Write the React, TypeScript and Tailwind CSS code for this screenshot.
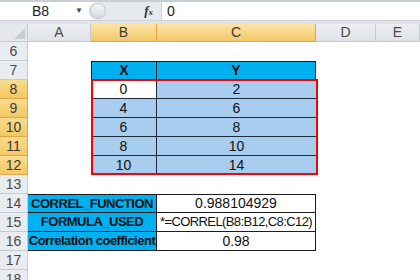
import React from "react";

const cols = [
  { key: "A", w: "w-[63px]" },
  { key: "B", w: "w-[66px]" },
  { key: "C", w: "w-[159px]" },
  { key: "D", w: "w-[60px]" },
  { key: "E", w: "flex-1" },
];

const font = "font-['Liberation_Sans',sans-serif]";

const data = [
  ["0", "2"],
  ["4", "6"],
  ["6", "8"],
  ["8", "10"],
  ["10", "14"],
];

const summary = [
  ["CORREL_FUNCTION", "0.988104929"],
  ["FORMULA_USED", "*=CORREL(B8:B12,C8:C12)"],
  ["Correlation coefficient", "0.98"],
];

function RowHead({ n, active }: { n: number; active?: boolean }) {
  return (
    <div
      className={`w-[28px] shrink-0 flex items-center justify-center border-r border-b text-[14px] ${
        active
          ? "bg-gradient-to-b from-[#f8dc8e] to-[#f3c862] border-[#e1a84a] text-[#3a3a3a]"
          : "bg-[#e9ecf0] border-[#c6cbd2] text-[#4a4a4a]"
      }`}
    >
      {n}
    </div>
  );
}

export default function App() {
  return (
    <div className={`w-[420px] h-[280px] overflow-hidden bg-white ${font}`}>
      {/* Formula bar */}
      <div className="h-[24px] bg-[#dfe3e8] border-t-2 border-[#c9ced5] flex flex-col">
        <div className="h-[18px] flex bg-white">
          <div className="w-[89px] flex items-center pl-[32px] pr-[6px] text-[14px] text-[#222]">
            <span className="flex-1">B8</span>
            <span className="text-[8px] text-[#444]">▼</span>
          </div>
          <div className="w-[72px] bg-[#e6e9ed] rounded-l-full flex items-center border-l border-[#d0d4da]">
            <div className="w-[16px] h-[16px] rounded-full bg-gradient-to-b from-[#f4f5f7] to-[#d6dadf] border border-[#c4c8ce]" />
            <span className="ml-auto mr-[8px] font-['Liberation_Serif',serif] italic font-bold text-[13px] text-[#333]">
              f<span className="text-[9px]">x</span>
            </span>
          </div>
          <div className="flex-1 flex items-center pl-[5px] text-[14px] text-[#222] border-l border-[#d0d4da]">0</div>
        </div>
        <div className="flex-1 border-t border-[#cfd3d9]" />
      </div>

      {/* Column headers */}
      <div className="h-[18px] flex text-[14px]">
        <div className="w-[28px] shrink-0 bg-[#e4e7eb] border-r border-b border-[#c6cbd2] flex items-end justify-end p-[2px]">
          <div className="w-0 h-0 border-l-[11px] border-l-transparent border-b-[11px] border-b-[#c9cdd3]" />
        </div>
        {cols.map((c) => {
          const active = c.key === "B" || c.key === "C";
          return (
            <div
              key={c.key}
              className={`${c.w} shrink-0 flex items-center justify-center border-r border-b ${
                active
                  ? "bg-gradient-to-b from-[#fbe4a6] to-[#f3c867] border-[#e3a64a] text-[#3a3a3a]"
                  : "bg-gradient-to-b from-[#eceef1] to-[#dfe3e8] border-[#c6cbd2] text-[#4a4a4a]"
              }`}
            >
              {c.key}
            </div>
          );
        })}
      </div>

      {/* Sheet body */}
      <div className="relative text-[14px] text-[#111]">
        {/* row 6 */}
        <div className="h-[19px] flex">
          <RowHead n={6} />
          <div className="flex-1" />
        </div>

        {/* row 7 */}
        <div className="h-[19px] flex">
          <RowHead n={7} />
          <div className="w-[63px]" />
          <div className="w-[66px] bg-[#00b0f0] border border-[#1c1c1c] font-bold flex items-center justify-center">X</div>
          <div className="w-[159px] bg-[#00b0f0] border border-l-0 border-[#1c1c1c] font-bold flex items-center justify-center">Y</div>
        </div>

        {data.map(([x, y], i) => (
          <div key={i} className="h-[19px] flex">
            <RowHead n={8 + i} active />
            <div className="w-[63px]" />
            <div
              className={`w-[66px] border-r border-b border-[#1c2a3a] flex items-center justify-center ${
                i === 0 ? "bg-white" : "bg-[#a9cdee]"
              }`}
            >
              {x}
            </div>
            <div className="w-[159px] bg-[#a9cdee] border-b border-[#1c2a3a] flex items-center justify-center">{y}</div>
          </div>
        ))}

        {/* selection outline over B8:C12 */}
        <div className="absolute left-[91px] top-[37px] w-[227px] h-[96px] border-[2.5px] border-[#ff0000] pointer-events-none" />

        {/* row 13 */}
        <div className="h-[19px] flex">
          <RowHead n={13} />
          <div className="flex-1" />
        </div>

        {summary.map(([label, value], i) => (
          <div key={label} className="h-[19px] flex">
            <RowHead n={14 + i} />
            <div
              className={`w-[129px] bg-[#00b0f0] border-r border-b border-[#1c1c1c] font-bold text-[13px] tracking-[-0.5px] flex items-center justify-center whitespace-nowrap ${
                i === 0 ? "border-t" : ""
              }`}
            >
              {label}
            </div>
            <div
              className={`w-[159px] bg-white border-r border-b border-[#1c1c1c] flex items-center justify-center whitespace-nowrap ${
                i === 1 ? "text-[13px] tracking-[-0.6px]" : ""
              } ${i === 0 ? "border-t" : ""}`}
            >
              {value}
            </div>
          </div>
        ))}

        <div className="h-[19px] flex">
          <RowHead n={17} />
          <div className="flex-1" />
        </div>
        <div className="h-[19px] flex">
          <RowHead n={18} />
          <div className="flex-1" />
        </div>
      </div>
    </div>
  );
}
